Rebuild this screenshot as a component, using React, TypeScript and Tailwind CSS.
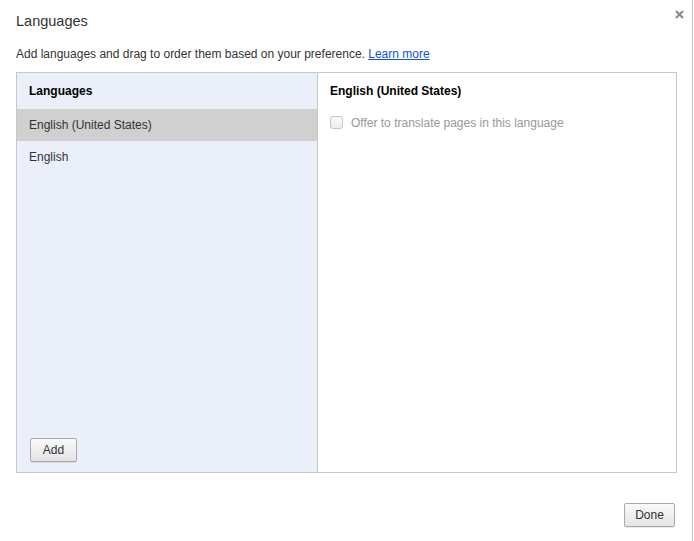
import React from 'react';

const buttonClass =
  'h-[24px] rounded-[2px] border border-[#a9a9a9] bg-gradient-to-b from-[#fafafa] to-[#e4e4e4] text-[12px] text-[#333] shadow-[0_1px_0_rgba(0,0,0,0.08)] leading-none';

const App: React.FC = () => {
  return (
    <div className="h-[541px] w-[694px] bg-white font-['Liberation_Sans',Arial,sans-serif] text-[#333]">
      <div className="relative flex h-full w-[693px] flex-col border-r border-[#c4c4c4]">
        <h1 className="pl-[16px] pt-[12px] text-[14.5px] leading-[18px] text-[#333]">Languages</h1>
        <button className="absolute right-[5px] top-[6px] flex h-[16px] w-[16px] items-center justify-center text-[#888]" aria-label="Close">
          <svg width="9" height="9" viewBox="0 0 9 9" fill="none" stroke="currentColor" strokeWidth="2">
            <path d="M1 1l7 7M8 1L1 8" />
          </svg>
        </button>
        <p className="mt-[16px] pl-[16px] text-[12px] leading-[16px] text-[#333]">
          Add languages and drag to order them based on your preference.{' '}
          <a href="#" className="text-[#1155cc] underline">Learn more</a>
        </p>

        <div className="ml-[16px] mt-[10px] flex h-[401px] w-[661px] border border-[#c8c8c8]">
          <div className="flex w-[301px] flex-col border-r border-[#c8c8c8] bg-[#ebeff9]">
            <div className="flex h-[36px] items-center pl-[12px] text-[12px] font-bold text-black">Languages</div>
            <div className="flex h-[32px] items-center bg-[#d0d0d0] pl-[12px] text-[12px] text-[#333]">English (United States)</div>
            <div className="flex h-[32px] items-center pl-[12px] text-[12px] text-[#333]">English</div>
            <div className="flex-1" />
            <div className="pb-[10px] pl-[13px]">
              <button className={`${buttonClass} w-[47px]`}>Add</button>
            </div>
          </div>
          <div className="flex flex-1 flex-col pl-[12px]">
            <div className="flex h-[36px] items-center text-[12px] font-bold text-black">English (United States)</div>
            <label className="flex h-[27px] items-center gap-[8px] text-[12px] text-[#999]">
              <span className="block h-[13px] w-[13px] rounded-[3px] border border-[#c6c6c6] bg-gradient-to-b from-[#fafafa] to-[#ededed]" />
              Offer to translate pages in this language
            </label>
          </div>
        </div>

        <div className="mt-[30px] flex justify-end pr-[17px]">
          <button className={`${buttonClass} w-[51px]`}>Done</button>
        </div>
      </div>
    </div>
  );
};

export default App;
